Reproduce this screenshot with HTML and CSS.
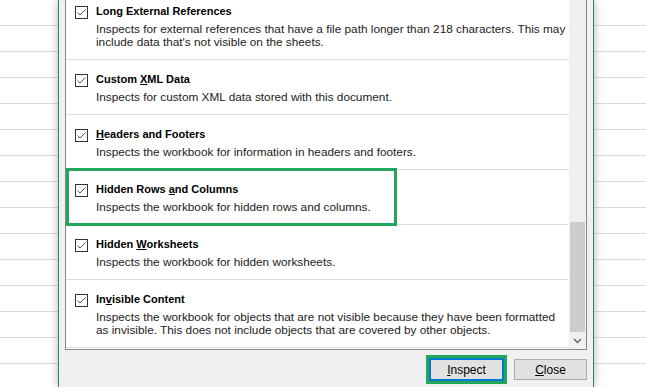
FILE: index.html
```html
<!DOCTYPE html>
<html>
    <head>
        <link rel="stylesheet" href="styles.css">
    </head>
    <body>
        <div class="sheet"></div>
        <section class="dialog">
            <div class="panel">
                <div class="list">
                    <div class="item">
                        <div class="item-head">
                            <svg class="check" width="13" height="13" viewBox="0 0 13 13"><rect x="0.5" y="0.5" width="12" height="12" fill="#fff" stroke="#333"/><polyline points="2.5,6.5 5,9 10.5,3.5" fill="none" stroke="#555" stroke-width="1"/></svg>
                            <span class="title">Lon<u>g</u> External References</span>
                        </div>
                        <p class="desc">Inspects for external references that have a file path longer than 218 characters. This may include data that's not visible on the sheets.</p>
                    </div>
                    <div class="item">
                        <div class="item-head">
                            <svg class="check" width="13" height="13" viewBox="0 0 13 13"><rect x="0.5" y="0.5" width="12" height="12" fill="#fff" stroke="#333"/><polyline points="2.5,6.5 5,9 10.5,3.5" fill="none" stroke="#555" stroke-width="1"/></svg>
                            <span class="title">Custom <u>X</u>ML Data</span>
                        </div>
                        <p class="desc">Inspects for custom XML data stored with this document.</p>
                    </div>
                    <div class="item">
                        <div class="item-head">
                            <svg class="check" width="13" height="13" viewBox="0 0 13 13"><rect x="0.5" y="0.5" width="12" height="12" fill="#fff" stroke="#333"/><polyline points="2.5,6.5 5,9 10.5,3.5" fill="none" stroke="#555" stroke-width="1"/></svg>
                            <span class="title"><u>H</u>eaders and Footers</span>
                        </div>
                        <p class="desc">Inspects the workbook for information in headers and footers.</p>
                    </div>
                    <div class="item highlighted">
                        <div class="item-head">
                            <svg class="check" width="13" height="13" viewBox="0 0 13 13"><rect x="0.5" y="0.5" width="12" height="12" fill="#fff" stroke="#333"/><polyline points="2.5,6.5 5,9 10.5,3.5" fill="none" stroke="#555" stroke-width="1"/></svg>
                            <span class="title">Hidden Rows <u>a</u>nd Columns</span>
                        </div>
                        <p class="desc">Inspects the workbook for hidden rows and columns.</p>
                    </div>
                    <div class="item">
                        <div class="item-head">
                            <svg class="check" width="13" height="13" viewBox="0 0 13 13"><rect x="0.5" y="0.5" width="12" height="12" fill="#fff" stroke="#333"/><polyline points="2.5,6.5 5,9 10.5,3.5" fill="none" stroke="#555" stroke-width="1"/></svg>
                            <span class="title">Hidden <u>W</u>orksheets</span>
                        </div>
                        <p class="desc">Inspects the workbook for hidden worksheets.</p>
                    </div>
                    <div class="item">
                        <div class="item-head">
                            <svg class="check" width="13" height="13" viewBox="0 0 13 13"><rect x="0.5" y="0.5" width="12" height="12" fill="#fff" stroke="#333"/><polyline points="2.5,6.5 5,9 10.5,3.5" fill="none" stroke="#555" stroke-width="1"/></svg>
                            <span class="title">In<u>v</u>isible Content</span>
                        </div>
                        <p class="desc">Inspects the workbook for objects that are not visible because they have been formatted as invisible. This does not include objects that are covered by other objects.</p>
                    </div>
                </div>
                <div class="scrollbar">
                    <div class="track"></div>
                    <div class="thumb"></div>
                    <div class="arrow">
                        <svg width="9" height="6" viewBox="0 0 9 6"><polyline points="1,1 4.5,4.5 8,1" fill="none" stroke="#606060" stroke-width="1.4"/></svg>
                    </div>
                </div>
            </div>
            <div class="buttons">
                <button class="btn btn-default"><u>I</u>nspect</button>
                <button class="btn"><u>C</u>lose</button>
            </div>
        </section>
        <div class="sheet"></div>
    </body>
</html>
```

FILE: styles.css
```css
body{
    margin: 0;
    height: 387px;
    overflow: hidden;
    display: flex;
    font-family: "Segoe UI", "Liberation Sans", Arial, sans-serif;
    font-size: 12px;
    color: #000;
    background: repeating-linear-gradient(to bottom, #fff 0 25px, #dadada 25px 26px);
}

.sheet{
    width: 58px;
    flex: none;
}

.sheet:last-child{
    flex: 1;
}

.dialog{
    width: 522px;
    flex: none;
    padding: 0 6px;
    background-color: #f0f0f0;
    border-left: 1px solid #1f8a72;
    border-right: 1px solid #1f8a72;
    box-shadow: 0 0 9px rgba(0, 0, 0, 0.3);
    display: flex;
    flex-direction: column;
    z-index: 1;
}

.panel{
    height: 350px;
    box-sizing: border-box;
    border: 1px solid #828790;
    border-top: none;
    display: flex;
    overflow: hidden;
    flex: none;
}

.list{
    flex: 1;
    margin-top: -8px;
    background-color: #fff;
}

.item{
    position: relative;
    padding: 11px 0 10px 9px;
    border-bottom: 1px solid #dcdcdc;
}

.item-head{
    display: flex;
    align-items: center;
    gap: 8px;
    height: 16px;
}

.check{
    flex: none;
    margin-top: 2px;
}

.title{
    font-size: 11px;
    font-weight: bold;
    line-height: 16px;
}

.desc{
    margin: 4px 0 0 21px;
    font-size: 11.8px;
    line-height: 13px;
    color: #1c1c1c;
}

.highlighted::after{
    content: "";
    position: absolute;
    left: 0;
    top: -2px;
    width: 331px;
    height: 58px;
    box-sizing: border-box;
    border: 3px solid #22a65c;
}

.scrollbar{
    width: 17px;
    flex: none;
    background-color: #f0f0f0;
    display: flex;
    flex-direction: column;
}

.track{
    flex: 1;
}

.thumb{
    height: 110px;
    margin: 0 1px;
    background-color: #cdcdcd;
}

.arrow{
    height: 17px;
    display: flex;
    align-items: center;
    justify-content: center;
}

.buttons{
    display: flex;
    justify-content: flex-end;
    align-items: center;
    gap: 10px;
    padding-top: 8px;
}

.btn{
    width: 73px;
    height: 21px;
    padding: 0;
    font-family: inherit;
    font-size: 12px;
    color: #000;
    background-color: #e1e1e1;
    border: 1px solid #adadad;
}

.btn-default{
    width: 75px;
    height: 23px;
    border: 2px solid #0078d7;
    outline: 3px solid #22a65c;
}
```
